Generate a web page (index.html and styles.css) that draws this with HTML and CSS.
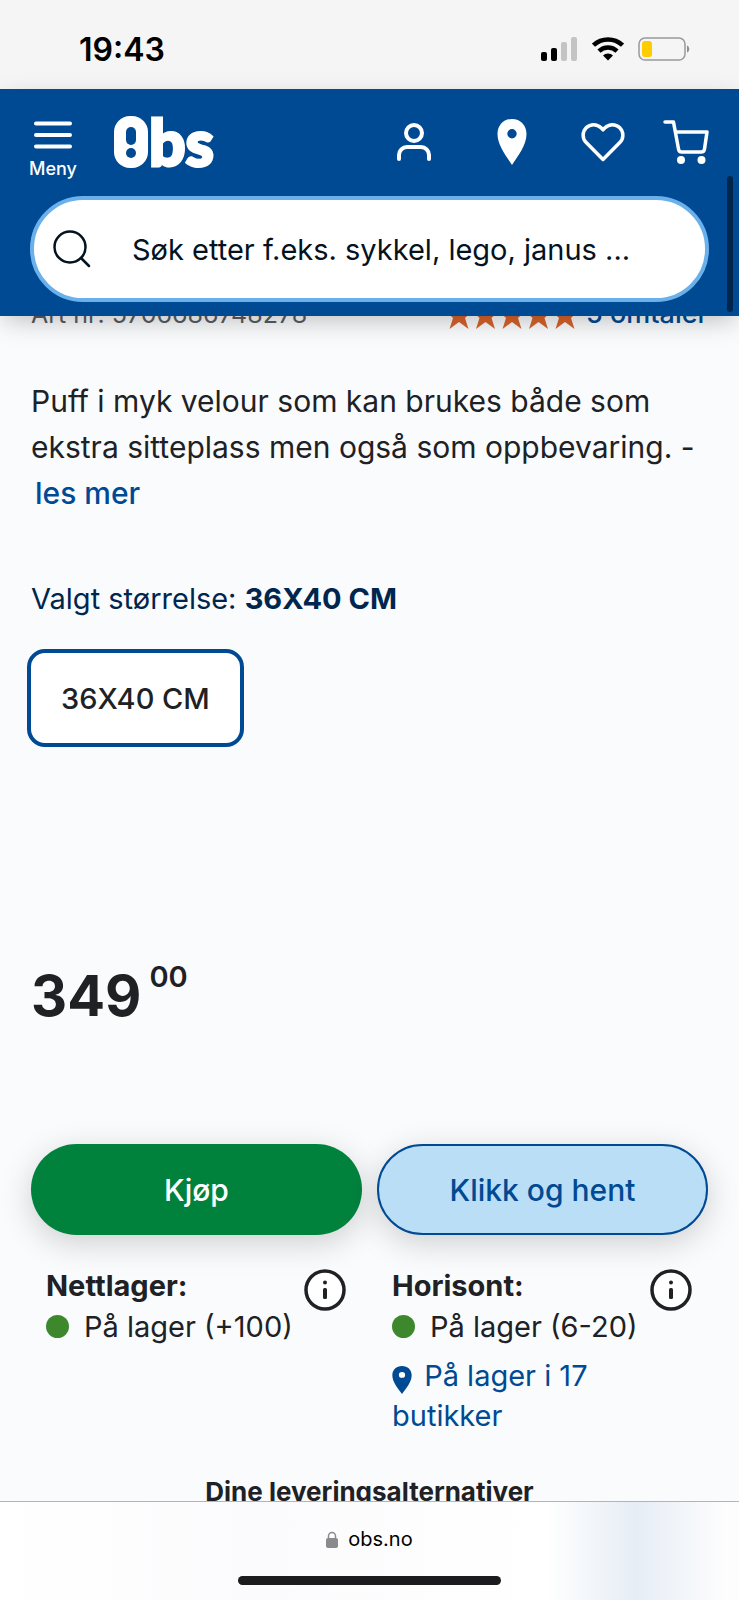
FILE: index.html
```html
<!DOCTYPE html>
<html lang="no">
<head>
    <meta charset="UTF-8">
    <meta name="viewport" content="width=device-width, initial-scale=1.0">
    <title>Puff 36x40 cm - Obs</title>
    <link rel="stylesheet" href="styles.css">
</head>
<body>
    <!-- Statuslinje -->
    <div class="statusbar">
        <span class="clock">19:43</span>
        <div class="status-icons">
            <svg width="37" height="24" viewBox="0 0 37 24">
                <rect x="0" y="15" width="6" height="9" rx="2" fill="#000"/>
                <rect x="10" y="11" width="6" height="13" rx="2" fill="#000"/>
                <rect x="20" y="5" width="6" height="19" rx="2" fill="#c4c4c4"/>
                <rect x="30" y="0" width="6" height="24" rx="2" fill="#c4c4c4"/>
            </svg>
            <svg width="32" height="24" viewBox="0 0 32 24" fill="none" stroke="#000" stroke-width="4.500">
                <path d="M1.500 8.200a21 21 0 0 1 29 0"/>
                <path d="M7 14.200a13 13 0 0 1 18 0"/>
                <path d="M11 18.600a7 7 0 0 1 10 0L16 23.600z" fill="#000" stroke="none"/>
            </svg>
            <svg width="52" height="24" viewBox="0 0 52 24">
                <rect x="1" y="1" width="46" height="22" rx="6" fill="none" stroke="#999" stroke-width="1.500"/>
                <rect x="4" y="4" width="10" height="16" rx="3" fill="#ffcc00"/>
                <path d="M49 8.500c3 1 3 6 0 7z" fill="#8e8e8e"/>
            </svg>
        </div>
    </div>

    <!-- Toppmeny -->
    <header class="header">
        <div class="header-row">
            <button class="menu-button">
                <svg width="38" height="28" viewBox="0 0 38 28" stroke="#fff" stroke-width="4" stroke-linecap="round">
                    <path d="M2 2.500h34M2 14h34M2 25.500h34"/>
                </svg>
                Meny
            </button>
            <a href="#" class="logo" aria-label="Obs">
                <svg width="108" height="54" viewBox="0 0 108 54">
                    <rect x="0" y="1" width="34" height="52" rx="16" fill="#fff"/>
                    <rect x="12" y="12" width="10" height="18" rx="5" fill="#004a93"/>
                    <circle cx="17" cy="38" r="5" fill="#004a93"/>
                    <text x="35" y="51" class="logo-text">bs</text>
                </svg>
            </a>
            <nav class="header-nav">
                <a href="#" aria-label="Min side">
                    <svg width="36" height="40" viewBox="0 0 36 40" fill="none" stroke="#fff" stroke-width="4" stroke-linecap="round">
                        <circle cx="18" cy="11" r="8"/>
                        <path d="M3 37v-4a8 8 0 0 1 8-8h14a8 8 0 0 1 8 8v4"/>
                    </svg>
                </a>
                <a href="#" aria-label="Butikker">
                    <svg width="30" height="46" viewBox="0 0 30 46">
                        <path fill="#fff" fill-rule="evenodd" d="M15 0C6.500 0 .5 6.300.5 15c0 11 8 21 14.500 31 6.500-10 14.500-20 14.500-31C29.500 6.300 23.500 0 15 0zm0 10a4.700 4.700 0 1 1 0 9.400 4.700 4.700 0 0 1 0-9.400z"/>
                    </svg>
                </a>
                <a href="#" aria-label="Favoritter">
                    <svg width="44" height="40" viewBox="0 0 44 40" fill="none" stroke="#fff" stroke-width="3.500" stroke-linejoin="round">
                        <path d="M22 37.500 5.200 20.600a10.500 10.500 0 0 1 0-14.800 10.500 10.500 0 0 1 14.800 0l2 2 2-2a10.500 10.500 0 0 1 14.800 0 10.500 10.500 0 0 1 0 14.800z"/>
                    </svg>
                </a>
                <a href="#" aria-label="Handlekurv">
                    <svg width="46" height="44" viewBox="0 0 46 44" fill="none" stroke="#fff" stroke-width="3.500" stroke-linecap="round" stroke-linejoin="round">
                        <path d="M2 2h8.500l5 27a3.500 3.500 0 0 0 3.500 3h19a3.500 3.500 0 0 0 3.500-3L44 12H13"/>
                        <circle cx="18" cy="40" r="4" fill="#fff" stroke="none"/>
                        <circle cx="38.500" cy="40" r="4" fill="#fff" stroke="none"/>
                    </svg>
                </a>
            </nav>
        </div>
        <label class="search">
            <svg width="38" height="38" viewBox="0 0 38 38" fill="none" stroke="#03131f" stroke-width="2.500" stroke-linecap="round">
                <circle cx="17" cy="17" r="15.500"/>
                <path d="M28 28l8 8"/>
            </svg>
            <input type="search" class="search-input" placeholder="Søk etter f.eks. sykkel, lego, janus ..." aria-label="Søk">
        </label>
        <span class="scrollbar"></span>
    </header>

    <!-- Produkt -->
    <main class="product">
        <div class="product-meta">
            <span class="sku">Art nr: 5706686748278</span>
            <a href="#" class="reviews">
                <svg width="132" height="29" viewBox="0 0 132 29" fill="#d9622b">
                    <path id="star" d="M13 0l3.600 11 9.400.2L19 18l3.500 11L13 22l-9.500 7L7 18 0 11.200l9.400-.2z"/>
                    <use href="#star" x="26.500"/>
                    <use href="#star" x="53"/>
                    <use href="#star" x="79.500"/>
                    <use href="#star" x="106"/>
                </svg>
                5 omtaler
            </a>
        </div>
        <p class="description">
            Puff i myk velour som kan brukes både som ekstra sitteplass men også som oppbevaring. -
            <a href="#" class="read-more">les mer</a>
        </p>

        <p class="size-label">Valgt størrelse: <b>36X40 CM</b></p>
        <button class="size-button">36X40 CM</button>

        <p class="price">349<sup>00</sup></p>

        <div class="columns">
            <button class="buy-button">Kjøp</button>
            <button class="buy-button collect">Klikk og hent</button>
        </div>

        <div class="columns">
            <div class="stock">
                <div class="stock-info">
                    <h2>Nettlager:</h2>
                    <p class="stock-status"><span class="dot"></span>På lager (+100)</p>
                </div>
                <button class="info-button" aria-label="Info om nettlager">
                    <svg width="42" height="42" viewBox="0 0 42 42">
                        <circle cx="21" cy="21" r="19" fill="#fff" stroke="#202124" stroke-width="3.500"/>
                        <circle cx="21" cy="13.500" r="2" fill="#202124"/>
                        <rect x="19" y="19" width="4" height="11" rx="1.500" fill="#202124"/>
                    </svg>
                </button>
            </div>
            <div class="stock">
                <div class="stock-info">
                    <h2>Horisont:</h2>
                    <p class="stock-status"><span class="dot"></span>På lager (6-20)</p>
                    <a href="#" class="stores">
                        <svg width="20" height="28" viewBox="0 0 30 46" preserveAspectRatio="none">
                            <path fill="#004a93" fill-rule="evenodd" d="M15 0C6.500 0 .5 6.300.5 15c0 11 8 21 14.500 31 6.500-10 14.500-20 14.500-31C29.500 6.300 23.500 0 15 0zm0 10a4.700 4.700 0 1 1 0 9.400 4.700 4.700 0 0 1 0-9.400z"/>
                        </svg>
                        På lager i 17 butikker
                    </a>
                </div>
                <button class="info-button" aria-label="Info om Horisont">
                    <svg width="42" height="42" viewBox="0 0 42 42">
                        <circle cx="21" cy="21" r="19" fill="#fff" stroke="#202124" stroke-width="3.500"/>
                        <circle cx="21" cy="13.500" r="2" fill="#202124"/>
                        <rect x="19" y="19" width="4" height="11" rx="1.500" fill="#202124"/>
                    </svg>
                </button>
            </div>
        </div>

        <h3 class="delivery">Dine leveringsalternativer</h3>
    </main>

    <!-- Adresselinje -->
    <footer class="addressbar">
        <div class="address">
            <svg width="12" height="17" viewBox="0 0 12 17">
                <rect x="0" y="7" width="12" height="10" rx="2" fill="#8a8a8e"/>
                <path d="M2.500 8V5a3.500 3.500 0 0 1 7 0v3" fill="none" stroke="#8a8a8e" stroke-width="1.500"/>
            </svg>
            obs.no
        </div>
        <span class="home-indicator"></span>
    </footer>
</body>
</html>
```
FILE: styles.css
```css
* {
    box-sizing: border-box;
}
body {
    margin: 0;
    height: 100vh;
    display: flex;
    flex-direction: column;
    background-color: #f9fbfd;
    color: #202124;
    font-family: "Inter", sans-serif;
    font-size: 29px;
}
a {
    color: #004a93;
    text-decoration: none;
}
button {
    font-family: inherit;
    font-size: inherit;
    cursor: pointer;
}
svg {
    display: block;
    flex-shrink: 0;
}
h2, h3, p {
    margin: 0;
    font-size: inherit;
}

/* Statuslinje */
.statusbar {
    display: flex;
    justify-content: space-between;
    align-items: center;
    padding: 9px 49px 0 79px;
    height: 89px;
    background-color: #f5f5f5;
    color: #000;
}
.clock {
    font-size: 32px;
    font-weight: 600;
}
.status-icons {
    display: flex;
    gap: 14px;
}

/* Toppmeny */
.header {
    position: relative;
    z-index: 1;
    padding: 26px 30px 14px 29px;
    background-color: #004a93;
    box-shadow: 0 8px 24px -4px rgba(0, 0, 0, 0.25);
}
.header-row {
    display: flex;
    align-items: flex-start;
    height: 81px;
}
.menu-button {
    display: flex;
    flex-direction: column;
    align-items: center;
    gap: 8px;
    padding: 6px 0 0;
    border: none;
    background: none;
    color: #fff;
    font-size: 18px;
    font-weight: 500;
    line-height: 24px;
}
.logo {
    margin-left: 37px;
}
.logo-text {
    font-family: "Lato", sans-serif;
    font-size: 64px;
    font-weight: 900;
    fill: #fff;
    stroke: #fff;
    stroke-width: 3px;
}
.header-nav {
    display: flex;
    align-items: center;
    margin-left: auto;
    height: 54px;
    gap: 60px;
}
.header-nav a:nth-child(1) {
    margin-right: 5px;
}
.header-nav a:nth-child(3) {
    margin-left: -6px;
}
.header-nav a:nth-child(4) {
    margin-left: -22px;
}
.search {
    display: flex;
    align-items: center;
    gap: 41px;
    height: 106px;
    margin-left: 1px;
    padding: 0 19px;
    border: 4px solid #6ab1ec;
    border-radius: 53px;
    background-color: #fff;
}
.search-input {
    flex: 1;
    min-width: 0;
    padding: 0;
    border: none;
    outline: none;
    background: none;
    color: #03131f;
    font-family: inherit;
    font-size: 29px;
}
.search-input::placeholder {
    color: #03131f;
    opacity: 1;
}
.scrollbar {
    position: absolute;
    right: 6px;
    bottom: 4px;
    width: 6px;
    height: 136px;
    border-radius: 3px;
    background-color: #00264e;
}

/* Produkt */
.product {
    flex: 1;
    min-height: 0;
    overflow: hidden;
    padding: 0 31px;
}
.product-meta {
    display: flex;
    justify-content: space-between;
    margin-top: -18px;
    line-height: 32px;
}
.sku {
    color: #5a5c60;
    font-size: 25px;
}
.reviews {
    display: flex;
    align-items: center;
    gap: 8px;
    font-size: 27px;
    font-weight: 500;
}
.description {
    margin-top: 48px;
    font-size: 30px;
    line-height: 46px;
}
.read-more {
    margin-left: 4px;
    font-weight: 500;
}
.size-label {
    margin-top: 60px;
    color: #00264e;
    line-height: 46px;
}
.size-button {
    margin: 27px 0 0 -4px;
    padding: 0 30px;
    height: 98px;
    border: 4px solid #004a93;
    border-radius: 18px;
    background-color: #fff;
    color: #202124;
    font-weight: 500;
}
.price {
    display: flex;
    align-items: flex-start;
    gap: 8px;
    margin-top: 209px;
    font-size: 56px;
    font-weight: 700;
    line-height: 80px;
}
.price sup {
    font-size: 29px;
    font-weight: 600;
    line-height: 42px;
}
.columns {
    display: grid;
    grid-template-columns: 1fr 1fr;
    column-gap: 15px;
}
.price + .columns {
    margin-top: 108px;
}
.buy-button {
    height: 91px;
    border: none;
    border-radius: 46px;
    background-color: #00823d;
    color: #fff;
    font-size: 30px;
    font-weight: 500;
    box-shadow: 0 8px 32px rgba(0, 0, 0, 0.18);
}
.buy-button.collect {
    border: 2px solid #004a93;
    background-color: #bbdef7;
    color: #004a93;
}
.stock {
    display: flex;
    justify-content: space-between;
    align-items: flex-start;
    padding: 30px 16px 0 15px;
}
.stock-info {
    flex: 1;
    line-height: 41px;
}
.stock-status {
    display: flex;
    align-items: center;
    gap: 15px;
    white-space: nowrap;
}
.dot {
    width: 23px;
    height: 23px;
    border-radius: 50%;
    background-color: #3d882d;
}
.stores {
    display: block;
    margin-top: 9px;
    line-height: 40px;
}
.stores svg {
    display: inline-block;
    margin-right: 4px;
    vertical-align: -8px;
}
.info-button {
    margin-top: 4px;
    padding: 0;
    width: 42px;
    border: none;
    background: none;
}
.delivery {
    margin-top: 36px;
    font-size: 26px;
    line-height: 40px;
    text-align: center;
}

/* Adresselinje */
.addressbar {
    position: relative;
    z-index: 1;
    display: flex;
    flex-direction: column;
    align-items: center;
    gap: 24px;
    padding: 24px 0 15px;
    border-top: 1px solid #b4b4b8;
    background: linear-gradient(90deg, #fff 0%, #fbfbfd 35%, #fff 74%, #e6edf5 86%, #fdfdfe 98%);
}
.address {
    display: flex;
    align-items: center;
    gap: 10px;
    color: #000;
    font-size: 20px;
    line-height: 26px;
}
.home-indicator {
    width: 263px;
    height: 9px;
    border-radius: 5px;
    background-color: #1c1c1e;
}
```
